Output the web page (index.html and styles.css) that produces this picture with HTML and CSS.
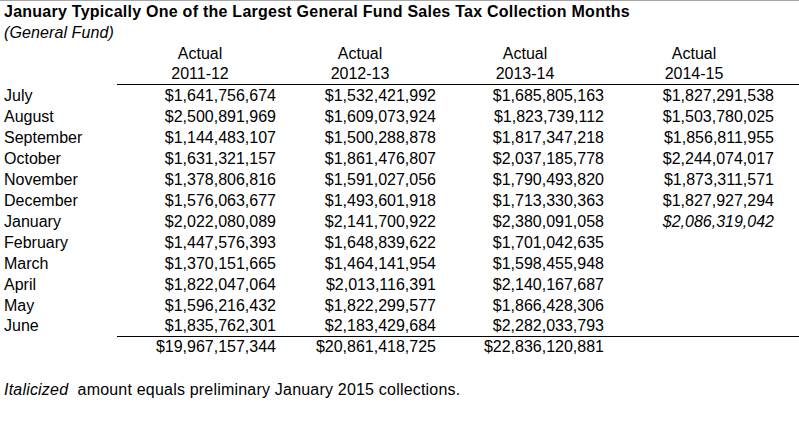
FILE: index.html
```html
<!DOCTYPE html>
<html lang="en">
<head>
<meta charset="utf-8">
<title>January Sales Tax Collections</title>
<link rel="stylesheet" href="styles.css">
</head>
<body>
<div class="page">
  <h1 class="title">January Typically One of the Largest General Fund Sales Tax Collection Months</h1>
  <p class="subtitle">(General Fund)</p>
  <table class="data">
    <colgroup>
      <col class="c-label">
      <col class="c-1">
      <col class="c-2">
      <col class="c-3">
      <col class="c-4">
      <col class="c-end">
    </colgroup>
    <thead>
      <tr class="hrow">
        <th></th>
        <th class="h1">Actual</th>
        <th class="h2">Actual</th>
        <th class="h3">Actual</th>
        <th class="h4">Actual</th>
        <th></th>
      </tr>
      <tr class="hrow yrow">
        <th class="nb"></th>
        <th class="h1">2011-12</th>
        <th class="h2">2012-13</th>
        <th class="h3">2013-14</th>
        <th class="h4">2014-15</th>
        <th></th>
      </tr>
    </thead>
    <tbody>
      <tr><td class="m">July</td><td class="v1">$1,641,756,674</td><td class="v2">$1,532,421,992</td><td class="v3">$1,685,805,163</td><td class="v4">$1,827,291,538</td><td></td></tr>
      <tr><td class="m">August</td><td class="v1">$2,500,891,969</td><td class="v2">$1,609,073,924</td><td class="v3">$1,823,739,112</td><td class="v4">$1,503,780,025</td><td></td></tr>
      <tr><td class="m">September</td><td class="v1">$1,144,483,107</td><td class="v2">$1,500,288,878</td><td class="v3">$1,817,347,218</td><td class="v4">$1,856,811,955</td><td></td></tr>
      <tr><td class="m">October</td><td class="v1">$1,631,321,157</td><td class="v2">$1,861,476,807</td><td class="v3">$2,037,185,778</td><td class="v4">$2,244,074,017</td><td></td></tr>
      <tr><td class="m">November</td><td class="v1">$1,378,806,816</td><td class="v2">$1,591,027,056</td><td class="v3">$1,790,493,820</td><td class="v4">$1,873,311,571</td><td></td></tr>
      <tr><td class="m">December</td><td class="v1">$1,576,063,677</td><td class="v2">$1,493,601,918</td><td class="v3">$1,713,330,363</td><td class="v4">$1,827,927,294</td><td></td></tr>
      <tr><td class="m">January</td><td class="v1">$2,022,080,089</td><td class="v2">$2,141,700,922</td><td class="v3">$2,380,091,058</td><td class="v4 prelim">$2,086,319,042</td><td></td></tr>
      <tr><td class="m">February</td><td class="v1">$1,447,576,393</td><td class="v2">$1,648,839,622</td><td class="v3">$1,701,042,635</td><td class="v4"></td><td></td></tr>
      <tr><td class="m">March</td><td class="v1">$1,370,151,665</td><td class="v2">$1,464,141,954</td><td class="v3">$1,598,455,948</td><td class="v4"></td><td></td></tr>
      <tr><td class="m">April</td><td class="v1">$1,822,047,064</td><td class="v2">$2,013,116,391</td><td class="v3">$2,140,167,687</td><td class="v4"></td><td></td></tr>
      <tr><td class="m">May</td><td class="v1">$1,596,216,432</td><td class="v2">$1,822,299,577</td><td class="v3">$1,866,428,306</td><td class="v4"></td><td></td></tr>
      <tr class="last"><td class="m">June</td><td class="v1">$1,835,762,301</td><td class="v2">$2,183,429,684</td><td class="v3">$2,282,033,793</td><td class="v4"></td><td></td></tr>
    </tbody>
    <tfoot>
      <tr class="total">
        <td class="m nb"></td>
        <td class="v1">$19,967,157,344</td>
        <td class="v2">$20,861,418,725</td>
        <td class="v3">$22,836,120,881</td>
        <td class="v4"></td>
        <td></td>
      </tr>
    </tfoot>
  </table>
  <p class="note"><em>Italicized</em>&nbsp; amount equals preliminary January 2015 collections.</p>
</div>
</body>
</html>
```

FILE: styles.css
```css
html, body {
  margin: 0;
  padding: 0;
  background: #ffffff;
}

body {
  font-family: "Liberation Sans", Arial, sans-serif;
  font-size: 16px;
  color: #000000;
  border-top: 1px solid #a6a6a6;
}

.page {
  width: 799px;
}

.title {
  margin: 0;
  padding-left: 4px;
  font-size: 16px;
  font-weight: bold;
  line-height: 21px;
  letter-spacing: 0.25px;
}

.subtitle {
  margin: 0;
  padding-left: 4px;
  font-style: italic;
  line-height: 21px;
  letter-spacing: 0.1px;
}

.data {
  table-layout: fixed;
  width: 799px;
  border-collapse: separate;
  border-spacing: 0;
}

.c-label { width: 117px; }
.c-1 { width: 166px; }
.c-2 { width: 154px; }
.c-3 { width: 176px; }
.c-4 { width: 162px; }
.c-end { width: 24px; }

.data th,
.data td {
  padding: 0;
  line-height: 21px;
  height: 21px;
  white-space: nowrap;
  font-weight: normal;
}

.data th {
  text-align: center;
}

.yrow th {
  line-height: 20px;
  height: 20px;
  border-bottom: 1px solid #000000;
}

.yrow th.nb {
  border-bottom: none;
}

.m {
  text-align: left;
  padding-left: 4px !important;
}

.v1 { text-align: right; padding-right: 7px !important; }
.v2 { text-align: right; padding-right: 1px !important; }
.v3 { text-align: right; padding-right: 9px !important; }
.v4 { text-align: right; padding-right: 1px !important; }

.prelim {
  font-style: italic;
}

.last td {
  line-height: 20px;
  height: 20px;
}

.total td {
  line-height: 20px;
  height: 20px;
  border-top: 1px solid #000000;
}

.total td.nb {
  border-top: none;
}

.note {
  margin: 22px 0 0 0;
  padding-left: 4px;
  line-height: 21px;
  letter-spacing: 0.2px;
}
```
